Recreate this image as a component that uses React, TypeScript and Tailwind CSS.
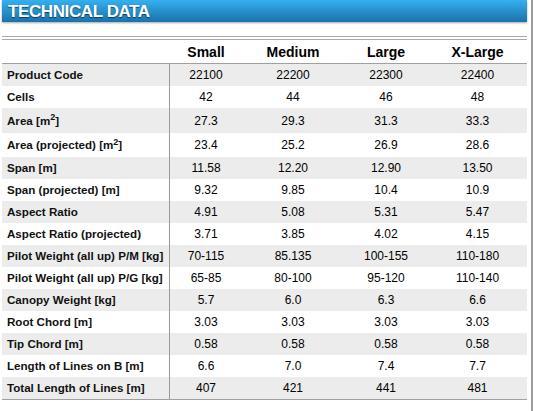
import React from 'react';

type Row = { label: React.ReactNode; values: string[]; h?: string };

const M2 = () => (
  <>
    [m<sup className="text-[9px]">2</sup>]
  </>
);

const rows: Row[] = [
  { label: 'Product Code', values: ['22100', '22200', '22300', '22400'] },
  { label: 'Cells', values: ['42', '44', '46', '48'] },
  { label: <>Area <M2 /></>, values: ['27.3', '29.3', '31.3', '33.3'], h: 'h-[25px]' },
  { label: <>Area (projected) <M2 /></>, values: ['23.4', '25.2', '26.9', '28.6'], h: 'h-[24px]' },
  { label: 'Span [m]', values: ['11.58', '12.20', '12.90', '13.50'] },
  { label: 'Span (projected) [m]', values: ['9.32', '9.85', '10.4', '10.9'] },
  { label: 'Aspect Ratio', values: ['4.91', '5.08', '5.31', '5.47'] },
  { label: 'Aspect Ratio (projected)', values: ['3.71', '3.85', '4.02', '4.15'] },
  { label: 'Pilot Weight (all up) P/M [kg]', values: ['70-115', '85.135', '100-155', '110-180'] },
  { label: 'Pilot Weight (all up) P/G [kg]', values: ['65-85', '80-100', '95-120', '110-140'] },
  { label: 'Canopy Weight [kg]', values: ['5.7', '6.0', '6.3', '6.6'] },
  { label: 'Root Chord [m]', values: ['3.03', '3.03', '3.03', '3.03'] },
  { label: 'Tip Chord [m]', values: ['0.58', '0.58', '0.58', '0.58'] },
  { label: 'Length of Lines on B [m]', values: ['6.6', '7.0', '7.4', '7.7'] },
  { label: 'Total Length of Lines [m]', values: ['407', '421', '441', '481'] },
];

const sizes = ['Small', 'Medium', 'Large', 'X-Large'];

export default function App() {
  return (
    <div className="w-[533px] h-[411px] bg-white flex font-['Liberation_Sans',Arial,sans-serif] text-black overflow-hidden">
      <div className="w-[525px] ml-[2px] flex flex-col">

        {/* Title bar */}
        <div className="h-[22px] bg-gradient-to-b from-[#35b0f0] to-[#1a72ab] shadow-[0_1px_2px_rgba(0,0,0,0.35)] flex items-center pl-[6px]">
          <h1 className="text-white font-bold text-[17px] leading-none tracking-[-0.4px] [text-shadow:0_1px_1px_rgba(0,0,0,0.55)]">
            TECHNICAL DATA
          </h1>
        </div>

        {/* Double rule */}
        <div className="mt-[14px] border-t border-[#a8a8a8]" />
        <div className="mt-[2px] border-t border-[#a8a8a8]" />

        {/* Column heads */}
        <div className="grid grid-cols-[168px_72px_102px_84px_99px] h-[24px] items-center border-b border-[#a0a0a0]">
          <div />
          {sizes.map((s) => (
            <div key={s} className="text-center font-bold text-[14px] leading-none">
              {s}
            </div>
          ))}
        </div>

        {/* Data rows */}
        <div className="border-b border-[#a0a0a0]">
          {rows.map((r, i) => (
            <div
              key={i}
              className={`grid grid-cols-[168px_72px_102px_84px_99px] items-center text-[12px] ${r.h ?? 'h-[22px]'} ${i % 2 === 0 ? 'bg-[#ececec]' : 'bg-white'}`}
            >
              <div className="h-full flex items-center pl-[5px] font-bold text-[11.6px] border-r border-[#9a9a9a] text-[#111]">
                <span>{r.label}</span>
              </div>
              {r.values.map((v, j) => (
                <div key={j} className="text-center">
                  {v}
                </div>
              ))}
            </div>
          ))}
        </div>
      </div>

      {/* Right edge rule */}
      <div className="ml-[4px] w-[2px] h-full bg-[#9c9c9c]" />
    </div>
  );
}
